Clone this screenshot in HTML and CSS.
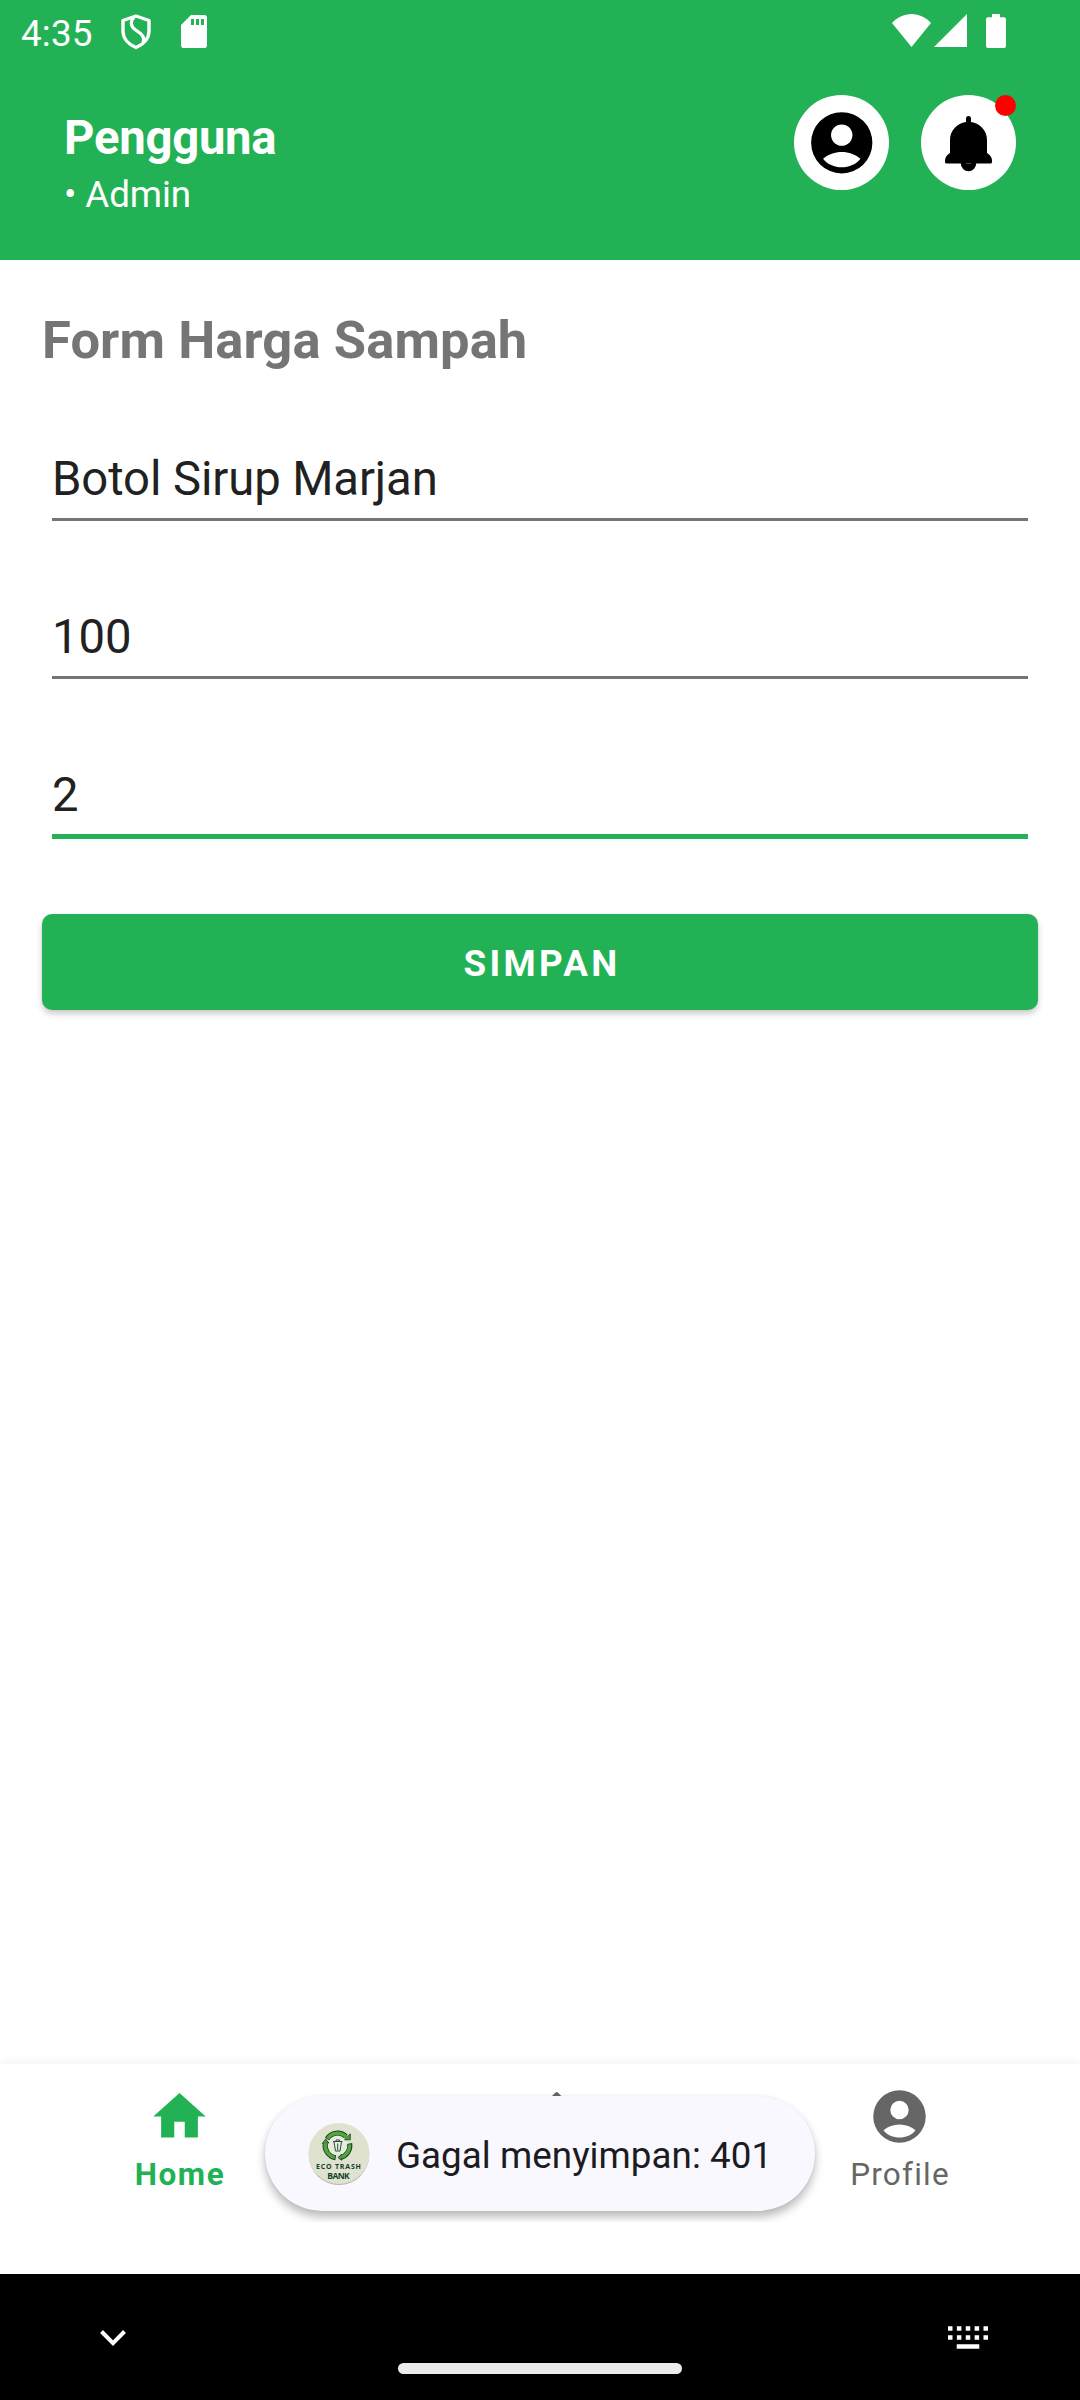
FILE: index.html
```html
<!DOCTYPE html>
<html lang="id">
<head>
<meta charset="utf-8">
<title>Form Harga Sampah</title>
<link rel="stylesheet" href="styles.css">
</head>
<body>
<div class="screen">
  <header class="header">
    <div class="status">
      <span class="clock">4:35</span>
      <svg class="shield" width="30" height="36" viewBox="0 0 30 36" fill="none" stroke="#fff" stroke-width="3.4" stroke-linejoin="round"><path d="M15 2 28 6.5V17C28 24.500 22.500 30.500 15 33.500 7.500 30.500 2 24.500 2 17V6.500Z"/><path d="M13.500 2.500C9 7.500 9.500 12 14 15.500L19.500 19.500C23 22.500 23.500 25 22 28.500" stroke-width="3.200"/></svg>
      <svg class="sd" width="26" height="33" viewBox="0 0 26 33"><path fill="#fff" fill-rule="evenodd" d="M10 0H23.200A2.800 2.800 0 0 1 26 2.800V30.200A2.800 2.800 0 0 1 23.200 33H2.800A2.800 2.800 0 0 1 0 30.200V10ZM10 4V10H13V4ZM15 4V10H18V4ZM20 4V10H23V4Z"/></svg>
      <div class="signals">
        <svg width="39" height="33" viewBox="0 0 39 33" fill="#fff"><path d="M19.500 33 0 9C5 3.500 12 0 19.500 0S34 3.500 39 9Z"/></svg>
        <svg class="cell" width="33" height="33" viewBox="0 0 33 33" fill="#fff"><path d="M0 33 33 0V33Z"/></svg>
        <svg class="battery" width="20" height="34" viewBox="0 0 20 34" fill="#fff"><path d="M6 0H14V3.300H18A2 2 0 0 1 20 5.300V32A2 2 0 0 1 18 34H2A2 2 0 0 1 0 32V5.300A2 2 0 0 1 2 3.300H6Z"/></svg>
      </div>
    </div>
    <div class="userbar">
      <div class="user">
        <div class="name">Pengguna</div>
        <div class="role">• Admin</div>
      </div>
      <div class="actions">
        <div class="circle">
          <svg width="73.5" height="73.5" viewBox="0 0 24 24"><path d="M12 2a10 10 0 1 0 0 20 10 10 0 0 0 0-20zM12 6a3.500 3.500 0 1 1 0 7 3.500 3.500 0 0 1 0-7zM12 20c-2.400 0-4.700-1-6.100-2.800C7.600 15.800 9.700 15 12 15s4.400.8 6.100 2.200C16.700 19 14.400 20 12 20z"/></svg>
        </div>
        <div class="circle">
          <svg width="95" height="95" viewBox="0 0 95 95"><path d="M45 27V23.500a2.500 2.500 0 0 1 5 0V27C59 28.300 66 35.500 66 45V58C69 60 71 62 71 65.500V67Q71 68.500 69.500 68.500H55.200a7.700 7.700 0 0 1-15.400 0H25.500Q24 68.500 24 67V65.500C24 62 26 60 29 58V45C29 35.500 36 28.300 45 27Z"/><path d="M45 68.500h5" stroke="#777" stroke-width=".6"/></svg>
          <span class="badge"></span>
        </div>
      </div>
    </div>
  </header>

  <main class="form">
    <h1 class="title">Form Harga Sampah</h1>
    <div class="field">Botol Sirup Marjan</div>
    <div class="field">100</div>
    <div class="field focused">2</div>
    <div class="save">SIMPAN</div>
  </main>

  <nav class="nav">
    <div class="tab active">
      <svg width="63" height="63" viewBox="0 0 24 24"><path d="M10 20v-6h4v6h5v-8h3L12 3 2 12h3v8z"/></svg>
      <span>Home</span>
    </div>
    <div class="tab">
      <svg width="63" height="63" viewBox="0 0 24 24"><path d="M18.100 2.900Q18.560 2.500 19 2.900L22.700 6.600 18.560 10.700 14.400 6.600Z"/></svg>
    </div>
    <div class="tab">
      <svg width="63" height="63" viewBox="0 0 24 24"><path d="M12 2a10 10 0 1 0 0 20 10 10 0 0 0 0-20zM12 6a3.500 3.500 0 1 1 0 7 3.500 3.500 0 0 1 0-7zM12 20c-2.400 0-4.700-1-6.100-2.800C7.600 15.800 9.700 15 12 15s4.400.8 6.100 2.200C16.700 19 14.400 20 12 20z"/></svg>
      <span>Profile</span>
    </div>
    <div class="toast-layer">
      <div class="toast">
        <svg class="logo" width="62" height="62" viewBox="0 0 62 62">
          <circle cx="31" cy="31.800" r="30.200" fill="#b4b4ba"/>
          <circle cx="31" cy="30.500" r="30.500" fill="#dfe2ce"/>
          <circle cx="29.500" cy="22.500" r="10" fill="#e8ecdc"/>
          <g fill="none" stroke="#123f2c" stroke-width="5">
            <path d="M19 16A12.300 12.300 0 0 1 38 13.500"/><path d="M41.700 20.500A12.300 12.300 0 0 1 32.500 34.500"/><path d="M27.700 34.700A12.300 12.300 0 0 1 17.400 20"/>
          </g>
          <g fill="#4f9f38" stroke="#123f2c" stroke-width=".8"><path d="M36.500 16.800H42.300V10.800Z"/><path d="M33.500 31.500 30 34.500 33.500 37.300Z"/><path d="M14.300 20.500 17.700 16 21 20Z"/></g>
          <g fill="none" stroke="#55a53b" stroke-width="3.300">
            <path d="M19.400 15.500A12.300 12.300 0 0 1 38.800 14.500"/><path d="M41.700 21.300A12.300 12.300 0 0 1 33.200 34.200"/><path d="M26.800 34.500A12.300 12.300 0 0 1 17.400 20"/>
          </g>
          <path d="M25 18.500H34.500M28 18V17H31.500V18M26 19 27.500 28H32L33.500 19M29.700 20.500V27" fill="none" stroke="#123f2c" stroke-width=".9"/>
          <text x="30.500" y="46" text-anchor="middle" textLength="45" class="logo-a">ECO TRASH</text>
          <text x="30.500" y="56.300" text-anchor="middle" textLength="22.500" class="logo-b">BANK</text>
        </svg>
        <span class="message">Gagal menyimpan: 401</span>
      </div>
    </div>
  </nav>

  <footer class="sysbar">
    <svg class="chevron" width="26" height="17" viewBox="0 0 26 17" fill="none" stroke="#fff" stroke-width="4"><path d="M1.500 1.500 13 13.200 24.500 1.500"/></svg>
    <div class="pill"></div>
    <svg class="keys" width="40" height="23" viewBox="0 0 40 23" fill="none" stroke="#fff" stroke-width="4.500"><path d="M0 2.500H40M0 11.400H40" stroke-dasharray="4.500 4.375"/><path d="M8.700 20.500H31.300"/></svg>
  </footer>
</div>
</body>
</html>
```
FILE: styles.css
```css
* { box-sizing: border-box; }
body { margin: 0; font-family: Roboto, sans-serif; background: #fff; }
svg { display: block; flex: none; }
.screen { width: 1080px; height: 2400px; display: flex; flex-direction: column; overflow: hidden; }

.header { height: 260px; background: #22b255; color: #fff; flex: none; }
.status { height: 63px; padding: 14px 74px 0 21px; display: flex; align-items: flex-start; }
.clock { font-size: 36.750px; line-height: 43px; width: 100px; margin-top: -2px; letter-spacing: .2px; }
.sd { margin: 1px 0 0 30px; }
.signals { display: flex; margin-left: auto; }
.cell { margin-left: 3px; }
.battery { margin-left: 19px; }
.userbar { display: flex; justify-content: space-between; padding: 32px 64px 0; }
.user { padding-top: 15px; }
.name { font-size: 47.250px; font-weight: 700; line-height: 56px; letter-spacing: -.25px; }
.role { font-size: 36.750px; line-height: 43px; margin-top: 7px; letter-spacing: -.1px; }
.actions { display: flex; gap: 32px; }
.circle { position: relative; width: 95px; height: 95px; border-radius: 50%; background: #fff; display: flex; align-items: center; justify-content: center; }
.badge { position: absolute; top: 0; right: 0; width: 21px; height: 21px; border-radius: 50%; background: #f00; }

.form { flex: 1; padding: 49px 42px 0; }
.title { margin: 0; font-size: 52.500px; line-height: 62px; font-weight: 700; color: #757575; letter-spacing: .1px; }
.field { margin: 58px 10px 0; height: 92px; padding-top: 23px; border-bottom: 3px solid #757575; font-size: 47.250px; line-height: 55px; letter-spacing: -.1px; color: #212121; }
.field + .field { margin-top: 66px; }
.field.focused { height: 94px; border-bottom: 5px solid #22b255; }
.save { margin-top: 75px; height: 96px; padding-left: 4px; border-radius: 10px; background: #22b255; color: #fff; font-size: 36.750px; font-weight: 700; letter-spacing: 3.350px; line-height: 99px; text-align: center; box-shadow: 0 4px 6px rgba(0,0,0,.2), 0 0 3px rgba(0,0,0,.06); }

.nav { position: relative; height: 210px; background: #fff; display: grid; grid-template-columns: repeat(3, 1fr); box-shadow: 0 -2px 8px rgba(0,0,0,.05); flex: none; }
.tab { display: flex; flex-direction: column; align-items: center; padding: 21px 1px 0 0; color: #666; fill: #666; font-size: 31.500px; line-height: 38px; letter-spacing: 1.200px; }
.tab span { margin: 8px 0 0 1px; }
.tab.active { color: #22b255; fill: #22b255; font-weight: 700; letter-spacing: 1.500px; }
.toast-layer { position: absolute; top: 0; left: 240px; width: 600px; height: 158px; padding-top: 32px; display: flex; justify-content: center; overflow: hidden; }
.toast { width: 550px; height: 115px; border-radius: 58px; background: #f9f8ff; display: flex; align-items: center; padding-left: 43px; gap: 26px; color: #1b1b21; font-size: 36.750px; line-height: 43px; letter-spacing: .05px; white-space: nowrap; box-shadow: 0 6px 10px rgba(0,0,0,.27), 0 0 3px rgba(0,0,0,.06); }
.message { padding-top: 3px; }
.logo-a { font: 700 7px "Open Sans", sans-serif; fill: #123f2c; }
.logo-b { font: 700 8.500px "Open Sans", sans-serif; fill: #123f2c; }

.sysbar { height: 126px; background: #000; flex: none; display: grid; grid-template-columns: 100px 298px 284px 265.500px auto; align-items: start; }
.chevron { grid-column: 2; margin-top: 56px; }
.pill { height: 11px; margin-top: 89px; border-radius: 5.500px; background: #ebebeb; }
.keys { grid-column: 5; margin-top: 52px; }
```
